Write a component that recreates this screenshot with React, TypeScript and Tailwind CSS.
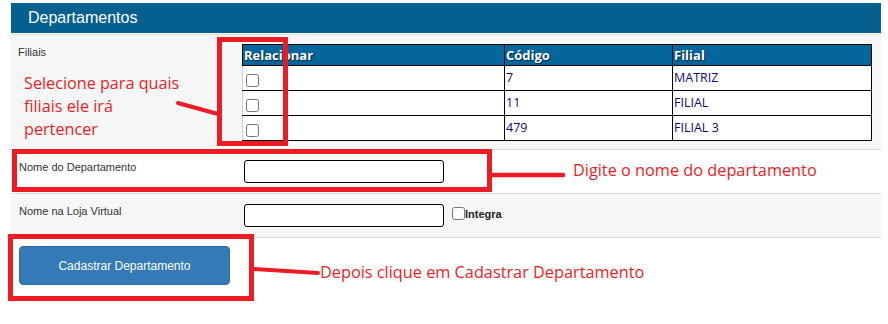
import React from "react";

const filiais = [
  { codigo: "7", nome: "MATRIZ" },
  { codigo: "11", nome: "FILIAL" },
  { codigo: "479", nome: "FILIAL 3" },
];

const red = "#ed1c24";

export default function App() {
  return (
    <div className="relative h-[324px] w-[888px] overflow-hidden bg-white font-['Liberation_Sans',Arial,sans-serif] text-[#333]">
      <div className="ml-[11px] w-[870px] pt-[3px]">
        <div className="h-[30px] bg-[#04608f] pl-[17px] text-[16px] leading-[30px] text-white">Departamentos</div>

        <div className="mt-px border-t border-[#dddddd]">
          {/* Filiais */}
          <div className="grid grid-cols-[231px_1fr] border-b border-[#dddddd] bg-[#f7f7f7] pt-[9px] pb-[8px]">
            <div className="pl-[7px] text-[11px]">Filiais</div>
            <table className="w-[630px] border-collapse font-['Open_Sans',sans-serif]">
              <thead>
                <tr className="h-[21px] bg-[#05669b] text-left text-[13px] font-bold text-white [text-shadow:1px_1px_1px_#00243a]">
                  <th className="w-[262px] border border-black px-px py-0 leading-none">Relacionar</th>
                  <th className="w-[168px] border border-black px-px py-0 leading-none">Código</th>
                  <th className="border border-black px-px py-0 leading-none">Filial</th>
                </tr>
              </thead>
              <tbody>
                {filiais.map((f) => (
                  <tr key={f.codigo} className="h-[25px] bg-white text-[12.5px] text-[#0b0a78]">
                    <td className="border border-black border-l-[#d0d0d0] pl-[3px] align-middle">
                      <input type="checkbox" className="mt-[5px] block h-[13px] w-[13px]" />
                    </td>
                    <td className="border border-black px-px align-middle leading-none">{f.codigo}</td>
                    <td className="border border-black px-px align-middle leading-none">{f.nome}</td>
                  </tr>
                ))}
              </tbody>
            </table>
          </div>

          {/* Nome do Departamento */}
          <div className="grid grid-cols-[231px_1fr] border-b border-[#dddddd] bg-white pb-[10px]">
            <div className="pt-[9px] pl-[8px] text-[11px]">Nome do Departamento</div>
            <div className="pt-[10px]">
              <input type="text" className="ml-[2px] block h-[23px] w-[200px] rounded-[3px] border border-black bg-white" />
            </div>
          </div>

          {/* Nome na Loja Virtual */}
          <div className="grid grid-cols-[231px_1fr] border-b border-[#dddddd] bg-[#f7f7f7] pb-[10px]">
            <div className="pt-[9px] pl-[8px] text-[11px]">Nome na Loja Virtual</div>
            <div className="flex items-start pt-[10px]">
              <input type="text" className="ml-[2px] block h-[23px] w-[200px] rounded-[3px] border border-black bg-white" />
              <input type="checkbox" className="mt-[3px] ml-[8px] block h-[13px] w-[13px]" />
              <span className="mt-[5px] text-[11px] font-bold leading-none text-[#222]">Integra</span>
            </div>
          </div>
        </div>

        <button className="mt-[8px] ml-[8px] h-[39px] w-[211px] rounded-[4px] border border-[#2e6da4] bg-[#337ab7] text-[12px] text-white">
          Cadastrar Departamento
        </button>
      </div>

      {/* annotations */}
      <div className="absolute left-[217px] top-[37px] h-[109px] w-[71px] border-[5px] border-[#ed1c24]" />
      <div className="absolute left-[12px] top-[149px] h-[43px] w-[480px] border-[5px] border-[#ed1c24]" />
      <div className="absolute left-[8px] top-[234px] h-[67px] w-[246px] border-[5px] border-[#ed1c24]" />

      <svg className="pointer-events-none absolute left-0 top-0" width="888" height="324">
        <line x1="178" y1="103" x2="218" y2="114" stroke={red} strokeWidth="4" strokeLinecap="round" />
        <line x1="492" y1="175" x2="563" y2="175" stroke={red} strokeWidth="4.5" strokeLinecap="round" />
        <line x1="254" y1="269" x2="318" y2="273" stroke={red} strokeWidth="4" strokeLinecap="round" />
      </svg>

      <div className="absolute left-[24px] top-[72px] font-['Open_Sans',sans-serif] text-[16.2px] leading-[23px] text-[#ed1c24]">
        Selecione para quais
        <br />
        filiais ele irá
        <br />
        pertencer
      </div>
      <div className="absolute left-[573px] top-[159px] font-['Open_Sans',sans-serif] text-[16.3px] leading-[23px] text-[#ed1c24]">
        Digite o nome do departamento
      </div>
      <div className="absolute left-[320px] top-[261px] font-['Open_Sans',sans-serif] text-[16.3px] leading-[23px] text-[#ed1c24]">
        Depois clique em Cadastrar Departamento
      </div>
    </div>
  );
}
